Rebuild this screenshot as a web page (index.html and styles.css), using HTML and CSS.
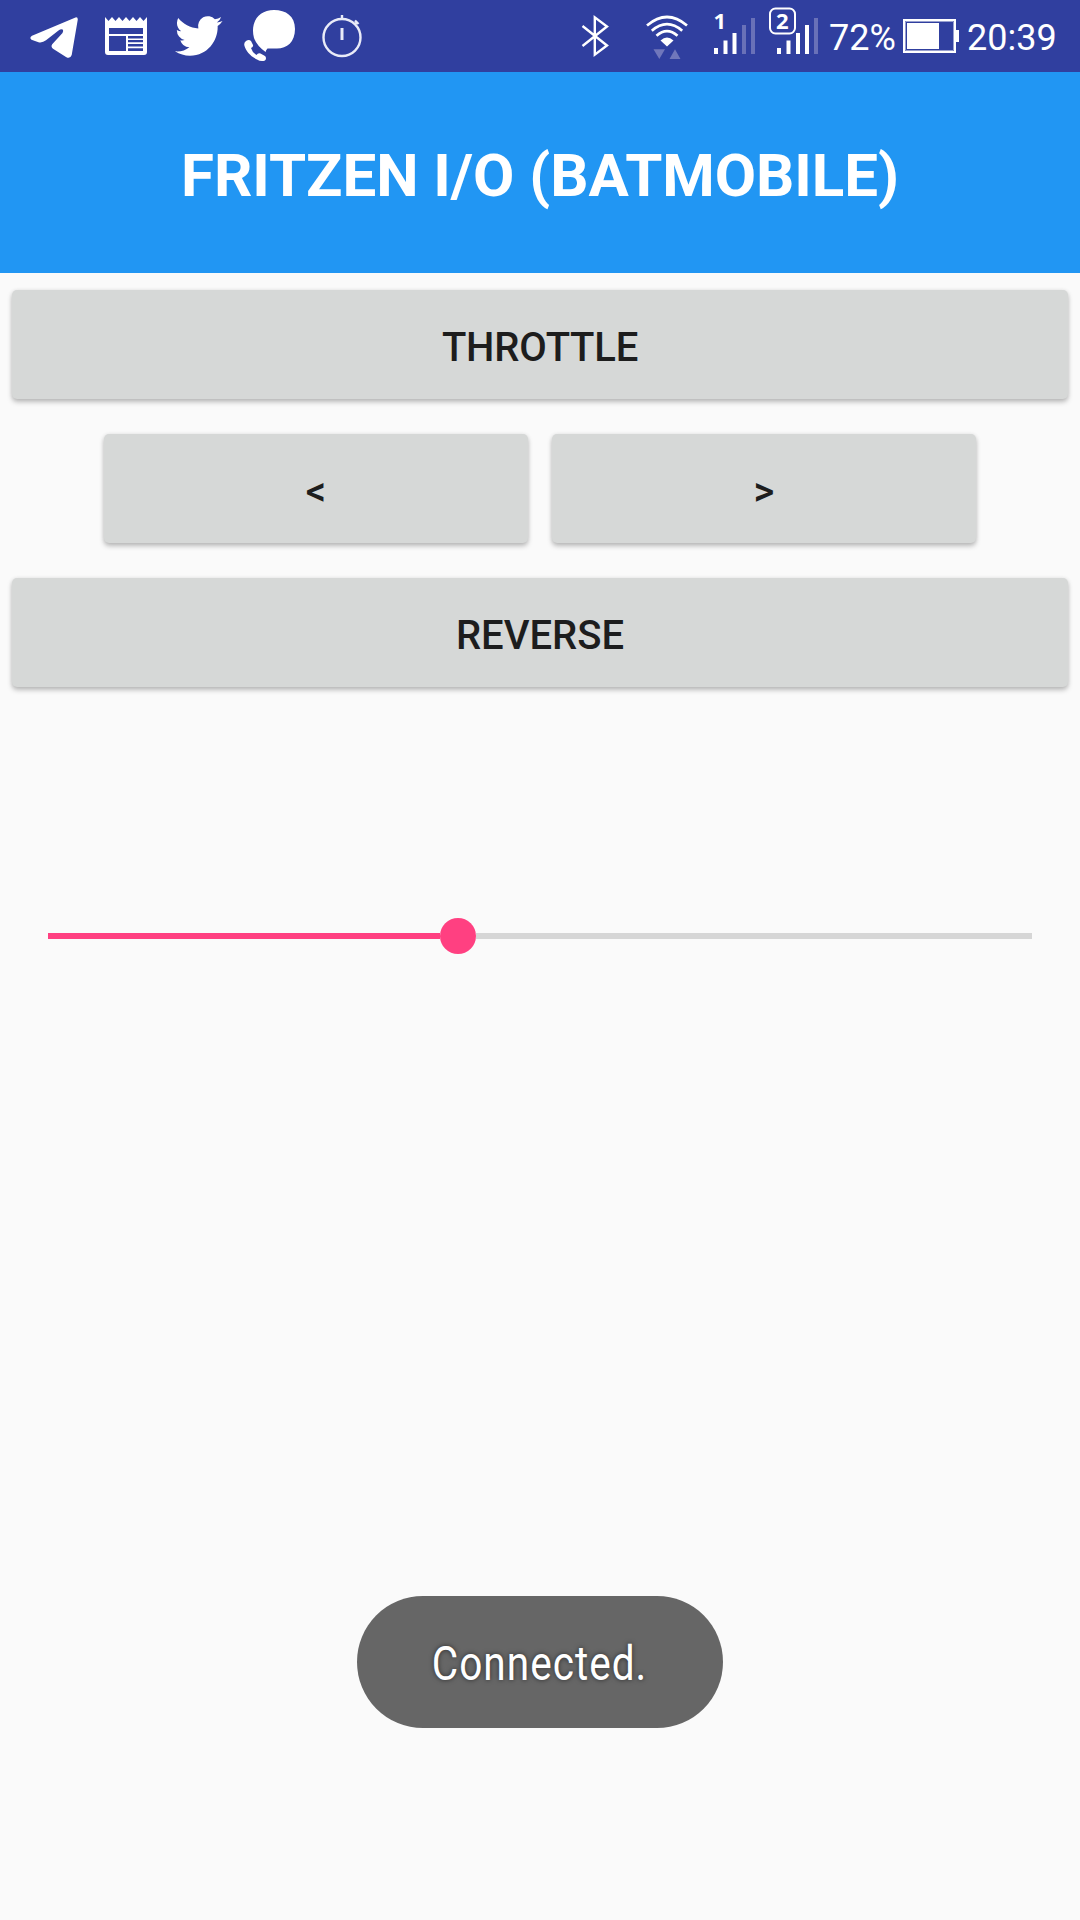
FILE: index.html
```html
<!DOCTYPE html>
<html lang="en">
<head>
<meta charset="utf-8">
<title>Fritzen I/O (Batmobile)</title>
<link rel="stylesheet" href="styles.css">
</head>
<body>
<header class="status">
  <div class="status-left">
    <svg width="50" height="72" viewBox="29 0 50 72" fill="#fff"><path d="M75.5 17.4 32 35.8Q29 37.6 31.5 39.8L38.5 42.2Q42.5 43 46 40.3L58.5 30.6Q61 28.6 62.7 29.6Q63.8 30.8 62.5 33L52.2 44.2Q50.5 46.5 53 48.7L66 56.9Q70 59.5 71.7 55L77.8 19.5Q77.8 16.8 75.5 17.4Z"/></svg>
    <svg width="42" height="72" viewBox="105 0 42 72" fill="#fff"><path fill-rule="evenodd" d="M105 17l3.500 4 3.500-4 3.500 4 3.500-4 3.500 4 3.500-4 3.500 4 3.500-4 3.500 4 3.500-4 3.500 4 3.500-4V52q0 3-3 3h-36q-3 0-3-3ZM109 28v6h34v-6ZM109 36v15h17V36ZM128 36v2.400h15V36ZM128 40v2.300h15V40ZM128 44v2.500h15V44ZM128 48.300v2.700h15v-2.700Z"/></svg>
    <svg width="48" height="72" viewBox="175 0 48 72" fill="#fff"><path transform="translate(175 11.6) scale(1.98 2.03)" d="M23.953 4.57a10 10 0 01-2.825.775 4.958 4.958 0 002.163-2.723c-.951.555-2.005.959-3.127 1.184a4.92 4.92 0 00-8.384 4.482C7.69 8.095 4.067 6.13 1.64 3.162a4.822 4.822 0 00-.666 2.475c0 1.71.87 3.213 2.188 4.096a4.904 4.904 0 01-2.228-.616v.06a4.923 4.923 0 003.946 4.827 4.996 4.996 0 01-2.212.085 4.936 4.936 0 004.604 3.417 9.867 9.867 0 01-6.102 2.105c-.39 0-.779-.023-1.17-.067a13.995 13.995 0 007.557 2.209c9.053 0 13.998-7.496 13.998-13.985 0-.21 0-.42-.015-.63A9.935 9.935 0 0024 4.59z"/></svg>
    <svg width="52" height="72" viewBox="244 0 52 72" fill="#fff"><path d="M274 10C286 10 295 16 295 29C295 42 287 48.500 277 48.500L267.500 48.500Q265.800 50 265.600 52Q257 46 254 38C250 23 258 10 274 10Z"/><path d="M246 41Q249 39 251 41L253 45Q253.500 47 251 48Q252 52 256.500 55Q258 52.500 260.500 53.500L265 56Q267 58 265 60.500Q261 62 257 59.500C250 56 246 51 244.500 46Q243.500 43 246 41Z"/></svg>
    <svg width="42" height="72" viewBox="321 0 42 72" fill="none" stroke="#e9ebf8" stroke-width="2.400"><circle cx="342" cy="37.500" r="18.500"/><path d="M342 15v4M354.500 24.500l3-3M355 20.500l3.500 3.500"/><path stroke-width="3" d="M342 28v12"/></svg>
  </div>
  <div class="status-right">
    <svg width="28" height="72" viewBox="581 0 28 72" fill="none" stroke="#fff" stroke-width="2.400"><path d="M582.500 26 607 45.500 594.800 54.700V17.300L607 26.500 582.500 46"/></svg>
    <svg class="wifi" width="44" height="72" viewBox="645 0 44 72" fill="none" stroke="#fff" stroke-width="2.700"><path d="M647 25.500Q667 8.500 687 25.500M651.800 30.700Q667 17.700 682.200 30.700M656.500 35.800Q667 26.500 677.500 35.800"/><path fill="#fff" stroke="none" d="M660.500 40.500Q667 34.500 673.500 40.500L667 46.500Z"/><path fill="#7077bb" stroke="none" d="M653.500 49.300h11.500l-5.700 9.700ZM669.500 59h11l-5.500-9.700Z"/></svg>
    <svg class="signal-one" width="42" height="72" viewBox="714 0 42 72" fill="#fff"><text class="sim" x="713.500" y="29">1</text><path d="M714 48h4v6h-4ZM723.500 40.500h4V54h-4ZM732.500 33h4v21h-4Z"/><path fill="#6971b8" d="M742 25h4v29h-4ZM751 18h4v36h-4Z"/></svg>
    <svg class="signal-two" width="50" height="72" viewBox="769 0 50 72" fill="#fff"><rect x="770" y="8.500" width="25" height="25" rx="5.500" fill="none" stroke="#fff" stroke-width="2"/><text class="sim" x="776" y="29">2</text><path d="M777 48h4v6h-4ZM786.500 40.500h4V54h-4ZM796 33h4v21h-4ZM805 25h4v29h-4Z"/><path fill="#6971b8" d="M814 18h4v36h-4Z"/></svg>
    <span class="percent">72%</span>
    <svg class="battery" width="57" height="72" viewBox="903 0 57 72"><path fill="none" stroke="#fff" stroke-width="2" d="M904 20h51v32h-51Z"/><path fill="none" stroke="#98a0d0" d="M905.500 21.500h48v29h-48Z"/><path fill="#fff" d="M907 23h32v26h-32ZM956 30h3v12h-3Z"/></svg>
    <span class="clock">20:39</span>
  </div>
</header>
<h1 class="title"><span>FRITZEN I/O (BATMOBILE)</span></h1>
<main class="controls">
  <button class="key throttle">THROTTLE</button>
  <div class="steering">
    <button class="key">&lt;</button>
    <button class="key">&gt;</button>
  </div>
  <button class="key">REVERSE</button>
  <div class="slider"><div class="filled"></div><div class="thumb"></div><div class="rest"></div></div>
</main>
<div class="toast"><span>Connected.</span></div>
</body>
</html>
```
FILE: styles.css
```css
* { box-sizing: border-box; }
body {
  margin: 0;
  width: 1080px;
  height: 1920px;
  overflow: hidden;
  position: relative;
  background: #fafafa;
  font-family: Roboto, sans-serif;
}
svg { display: block; flex: none; }
.status {
  height: 72px;
  padding: 0 24px 0 29px;
  display: flex;
  justify-content: space-between;
  background: #303f9f;
  color: #fff;
}
.status-left { display: flex; gap: 26px; }
.status-left svg:nth-child(3) { margin-left: 2px; }
.status-left svg:nth-child(4) { margin-left: -5px; }
.status-left svg:nth-child(5) { margin-left: -1px; }
.status-right { display: flex; width: 475px; flex: none; line-height: 76px; font-size: 36px; }
.status-right svg { overflow: visible; }
.wifi { margin-left: 36px; }
.signal-one { margin-left: 25px; }
.signal-two { margin-left: 13px; }
.sim { font: 700 22px "Noto Sans", sans-serif; }
.percent { flex: none; width: 74px; margin-left: 10px; }
.battery { margin-right: 7px; }
.clock { flex: none; }
.title {
  height: 201px;
  margin: 0;
  display: flex;
  justify-content: center;
  background: #2196f3;
  color: #fff;
  font-size: 60px;
  font-weight: 700;
  line-height: 70px;
  padding-top: 69px;
  white-space: nowrap;
}
.title span { letter-spacing: -.04px; }
.controls { padding: 17px 12px 0; display: flex; flex-direction: column; gap: 35px; }
.key {
  width: 100%;
  height: 109px;
  padding: 7px 0 0;
  border: 0;
  border-radius: 5px;
  background: #d6d8d7;
  color: #1d1d1d;
  font: 500 40px/48px Roboto, sans-serif;
  box-shadow: 0 3px 5px rgba(0, 0, 0, .25), 0 0 4px rgba(0, 0, 0, .07);
}
.throttle { letter-spacing: -.2px; }
.steering { display: flex; gap: 24px; padding: 0 92px; }
.slider { display: flex; align-items: center; height: 36px; margin: 196px 36px 0; }
.filled { width: 392px; height: 6px; background: #ff4081; }
.thumb { width: 36px; height: 36px; border-radius: 50%; background: #ff4081; }
.rest { flex: 1; height: 6px; background: #d6d6d6; }
.toast {
  position: absolute;
  left: 357px;
  top: 1596px;
  width: 366px;
  height: 132px;
  border-radius: 66px;
  display: flex;
  align-items: center;
  justify-content: center;
  background: #666;
  color: #fff;
  font-size: 48px;
  padding-top: 2px;
  text-shadow: 0 0 6px rgba(0, 0, 0, .6);
}
.toast span { letter-spacing: 1.2px; transform: scaleX(.845); }
```
